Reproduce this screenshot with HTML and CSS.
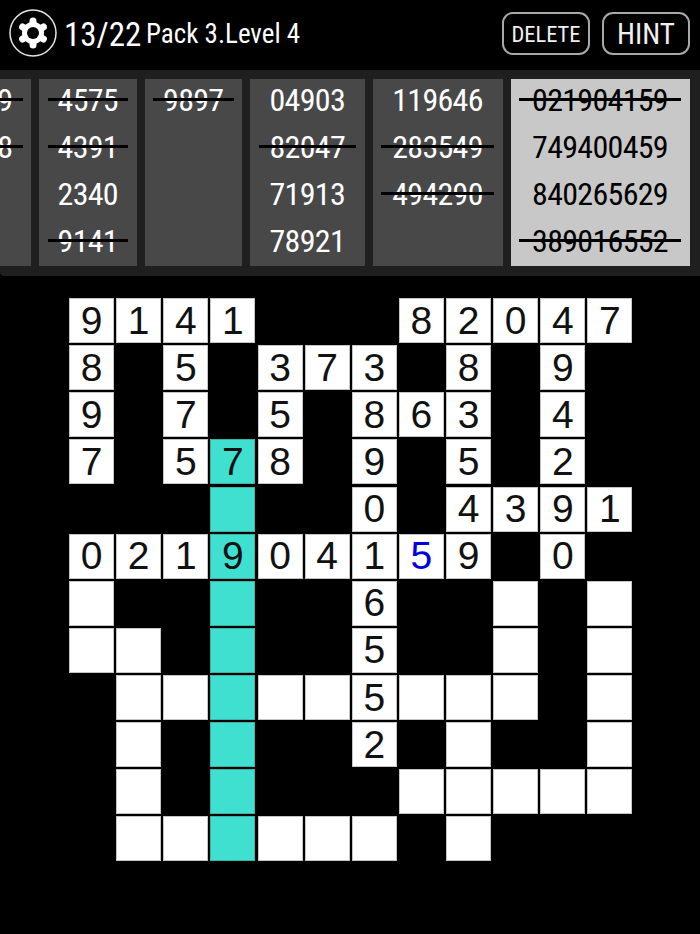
FILE: index.html
```html
<!DOCTYPE html>
<html lang="en">
<head>
<meta charset="utf-8">
<title>Pack 3.Level 4</title>
<link rel="stylesheet" href="styles.css">
</head>
<body>
<header class="topbar">
  <svg class="gear" viewBox="0 0 48 48" width="48" height="48" aria-hidden="true">
    <circle class="ring" cx="24" cy="24" r="23"/>
    <g class="teeth">
      <line x1="24" y1="24" x2="24" y2="12"/>
      <line x1="24" y1="24" x2="24" y2="36"/>
      <line x1="24" y1="24" x2="13.6" y2="18"/>
      <line x1="24" y1="24" x2="34.4" y2="18"/>
      <line x1="24" y1="24" x2="13.6" y2="30"/>
      <line x1="24" y1="24" x2="34.4" y2="30"/>
    </g>
    <circle class="body" cx="24" cy="24" r="11"/>
    <circle class="hole" cx="24" cy="24" r="6"/>
  </svg>
  <span class="progress">13/22</span>
  <span class="level">Pack 3.Level 4</span>
  <button class="btn btn-delete">DELETE</button>
  <button class="btn btn-hint">HINT</button>
</header>
<section class="tray">
  <div class="col w4 first">
    <div class="word done"><span>3829</span></div>
    <div class="word done"><span>7128</span></div>
  </div>
  <div class="col w4">
    <div class="word done"><span>4575</span></div>
    <div class="word done"><span>4391</span></div>
    <div class="word"><span>2340</span></div>
    <div class="word done"><span>9141</span></div>
  </div>
  <div class="col w4">
    <div class="word done"><span>9897</span></div>
  </div>
  <div class="col w5">
    <div class="word"><span>04903</span></div>
    <div class="word done"><span>82047</span></div>
    <div class="word"><span>71913</span></div>
    <div class="word"><span>78921</span></div>
  </div>
  <div class="col w6">
    <div class="word"><span>119646</span></div>
    <div class="word done"><span>283549</span></div>
    <div class="word done"><span>494290</span></div>
  </div>
  <div class="col w9 active">
    <div class="word done"><span>021904159</span></div>
    <div class="word"><span>749400459</span></div>
    <div class="word"><span>840265629</span></div>
    <div class="word done"><span>389016552</span></div>
  </div>
</section>
<main class="board">
  <div class="c">9</div><div class="c">1</div><div class="c">4</div><div class="c">1</div><i></i><i></i><i></i><div class="c">8</div><div class="c">2</div><div class="c">0</div><div class="c">4</div><div class="c">7</div>
  <div class="c">8</div><i></i><div class="c">5</div><i></i><div class="c">3</div><div class="c">7</div><div class="c">3</div><i></i><div class="c">8</div><i></i><div class="c">9</div><i></i>
  <div class="c">9</div><i></i><div class="c">7</div><i></i><div class="c">5</div><i></i><div class="c">8</div><div class="c">6</div><div class="c">3</div><i></i><div class="c">4</div><i></i>
  <div class="c">7</div><i></i><div class="c">5</div><div class="c t">7</div><div class="c">8</div><i></i><div class="c">9</div><i></i><div class="c">5</div><i></i><div class="c">2</div><i></i>
  <i></i><i></i><i></i><div class="c t"></div><i></i><i></i><div class="c">0</div><i></i><div class="c">4</div><div class="c">3</div><div class="c">9</div><div class="c">1</div>
  <div class="c">0</div><div class="c">2</div><div class="c">1</div><div class="c t">9</div><div class="c">0</div><div class="c">4</div><div class="c">1</div><div class="c blue">5</div><div class="c">9</div><i></i><div class="c">0</div><i></i>
  <div class="c"></div><i></i><i></i><div class="c t"></div><i></i><i></i><div class="c">6</div><i></i><i></i><div class="c"></div><i></i><div class="c"></div>
  <div class="c"></div><div class="c"></div><i></i><div class="c t"></div><i></i><i></i><div class="c">5</div><i></i><i></i><div class="c"></div><i></i><div class="c"></div>
  <i></i><div class="c"></div><div class="c"></div><div class="c t"></div><div class="c"></div><div class="c"></div><div class="c">5</div><div class="c"></div><div class="c"></div><div class="c"></div><i></i><div class="c"></div>
  <i></i><div class="c"></div><i></i><div class="c t"></div><i></i><i></i><div class="c">2</div><i></i><div class="c"></div><i></i><i></i><div class="c"></div>
  <i></i><div class="c"></div><i></i><div class="c t"></div><i></i><i></i><i></i><div class="c"></div><div class="c"></div><div class="c"></div><div class="c"></div><div class="c"></div>
  <i></i><div class="c"></div><div class="c"></div><div class="c t"></div><div class="c"></div><div class="c"></div><div class="c"></div><i></i><div class="c"></div><i></i><i></i><i></i>
</main>
</body>
</html>
```
FILE: styles.css
```css
* { box-sizing: border-box; }
html, body { margin: 0; height: 100%; }
body {
  width: 700px;
  height: 934px;
  overflow: hidden;
  background: #000;
  color: #fff;
  font-family: "Roboto Condensed", Roboto, sans-serif;
  font-stretch: condensed;
}
.topbar {
  height: 70px;
  display: flex;
  align-items: center;
  padding: 0 10px 4px 9px;
}
.gear { flex: none; }
.ring { fill: none; stroke: #e4e4e4; stroke-width: 1.5; }
.teeth line { stroke: #fff; stroke-width: 7; stroke-linecap: round; }
.body { fill: #fff; }
.hole { fill: #000; }
.progress,
.level { white-space: nowrap; padding-top: 2px; }
.progress { font-size: 33px; margin-left: 7px; width: 82px; }
.level { font-size: 27px; flex: 1; }
.btn {
  width: 88px;
  height: 43px;
  background: #000;
  color: #f0f0f0;
  border: 2px solid #a8a8a8;
  border-radius: 11px;
  padding: 2px 0 0;
  font-family: inherit;
  font-stretch: inherit;
}
.btn-delete { font-size: 22.5px; margin-right: 12px; }
.btn-hint { font-size: 29px; }
.tray {
  height: 206px;
  background: #1f1f1f;
  display: flex;
  gap: 8px;
  padding-top: 9px;
  overflow: hidden;
  border-bottom-left-radius: 4px;
}
.col {
  flex: none;
  height: 187px;
  background: #484848;
}
.w4 { width: 97.5px; }
.first { margin-left: -66.5px; }
.w5 { width: 114.5px; }
.w6 { width: 130px; }
.w9 { width: 179px; }
.col.active { background: #c8c8c8; color: #000; }
.word {
  position: relative;
  height: 47.1px;
  display: flex;
  align-items: center;
  justify-content: center;
  font-size: 32px;
  letter-spacing: -.7px;
  padding-bottom: 6px;
}
.done::after {
  content: "";
  position: absolute;
  left: 8.5px;
  right: 8.5px;
  top: 18.5px;
  height: 3px;
  background: #000;
}
.board {
  width: 563px;
  margin: 22px 0 0 69px;
  display: grid;
  grid-template-columns: repeat(12, 45px);
  grid-auto-rows: 45px;
  gap: 2.13px;
  font-family: "Liberation Sans", Arial, sans-serif;
  font-stretch: normal;
}
.c {
  background: #fff;
  color: #111;
  font-size: 39px;
  display: flex;
  align-items: center;
  justify-content: center;
  border: 1px solid #c4c4c4;
}
.t { background: #40e0d0; border-color: #3bb5a8; }
.blue { color: #0000e0; }
```
